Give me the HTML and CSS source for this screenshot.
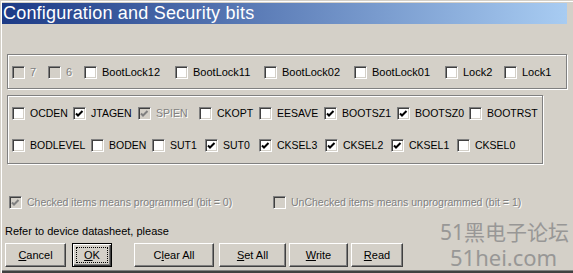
FILE: index.html
```html
<!DOCTYPE html>
<html lang="en">
<head>
  <meta charset="UTF-8" />
  <title>Configuration and Security bits</title>
  <link rel="stylesheet" href="styles.css">
</head>
<body>
  <div class="window">
    <div class="titlebar">Configuration and Security bits</div>

    <div class="group group-lock">
      <div class="row row-lock">
        <span class="item off"><span class="cb"></span>7</span>
        <span class="item off"><span class="cb"></span>6</span>
        <span class="item"><span class="cb"></span>BootLock12</span>
        <span class="item"><span class="cb"></span>BootLock11</span>
        <span class="item"><span class="cb"></span>BootLock02</span>
        <span class="item"><span class="cb"></span>BootLock01</span>
        <span class="item"><span class="cb"></span>Lock2</span>
        <span class="item"><span class="cb"></span>Lock1</span>
      </div>
    </div>

    <div class="group group-fuse">
      <div class="row row-fuse-a">
        <span class="item"><span class="cb"></span>OCDEN</span>
        <span class="item"><span class="cb checked"><svg viewBox="0 0 9 9"><polyline points="1,3.5 3,5.5 7.5,1"/></svg></span>JTAGEN</span>
        <span class="item off"><span class="cb checked"><svg viewBox="0 0 9 9"><polyline points="1,3.5 3,5.5 7.5,1"/></svg></span>SPIEN</span>
        <span class="item"><span class="cb"></span>CKOPT</span>
        <span class="item"><span class="cb"></span>EESAVE</span>
        <span class="item"><span class="cb checked"><svg viewBox="0 0 9 9"><polyline points="1,3.5 3,5.5 7.5,1"/></svg></span>BOOTSZ1</span>
        <span class="item"><span class="cb checked"><svg viewBox="0 0 9 9"><polyline points="1,3.5 3,5.5 7.5,1"/></svg></span>BOOTSZ0</span>
        <span class="item"><span class="cb"></span>BOOTRST</span>
      </div>
      <div class="row row-fuse-b">
        <span class="item"><span class="cb"></span>BODLEVEL</span>
        <span class="item"><span class="cb"></span>BODEN</span>
        <span class="item"><span class="cb"></span>SUT1</span>
        <span class="item"><span class="cb checked"><svg viewBox="0 0 9 9"><polyline points="1,3.5 3,5.5 7.5,1"/></svg></span>SUT0</span>
        <span class="item"><span class="cb checked"><svg viewBox="0 0 9 9"><polyline points="1,3.5 3,5.5 7.5,1"/></svg></span>CKSEL3</span>
        <span class="item"><span class="cb checked"><svg viewBox="0 0 9 9"><polyline points="1,3.5 3,5.5 7.5,1"/></svg></span>CKSEL2</span>
        <span class="item"><span class="cb checked"><svg viewBox="0 0 9 9"><polyline points="1,3.5 3,5.5 7.5,1"/></svg></span>CKSEL1</span>
        <span class="item"><span class="cb"></span>CKSEL0</span>
      </div>
    </div>

    <div class="legend">
      <span class="item off"><span class="cb checked"><svg viewBox="0 0 9 9"><polyline points="1,3.5 3,5.5 7.5,1"/></svg></span>Checked items means programmed (bit = 0)</span>
      <span class="item off"><span class="cb"></span>UnChecked items means unprogrammed (bit = 1)</span>
    </div>

    <div class="note">Refer to device datasheet, please</div>

    <div class="buttons">
      <button class="btn btn-cancel"><u>C</u>ancel</button>
      <button class="btn btn-ok default"><span class="focus"><u>O</u>K</span></button>
      <button class="btn btn-clear">C<u>l</u>ear All</button>
      <button class="btn btn-set"><u>S</u>et All</button>
      <button class="btn btn-write"><u>W</u>rite</button>
      <button class="btn btn-read"><u>R</u>ead</button>
    </div>

    <div class="watermark">
      <div class="wm-cn">51黑电子论坛</div>
      <div class="wm-en">51hei.com</div>
    </div>
  </div>
</body>
</html>
```

FILE: styles.css
```css
body {
  margin: 0;
  background: #d4d0c8;
}
.window {
  position: relative;
  width: 573px;
  height: 273px;
  box-sizing: border-box;
  overflow: hidden;
  background: #d4d0c8;
  font-family: "Liberation Sans", Arial, sans-serif;
  font-size: 11px;
  line-height: 13px;
  color: #000;
  box-shadow: inset 1px 1px 0 #d4d0c8, inset 2px 2px 0 #fff, inset 0 -2px 0 #404040, inset 0 -3px 0 #808080;
}
.titlebar {
  margin: 3px 6px 0 2px;
  height: 21px;
  padding-left: 1px;
  line-height: 21px;
  font-size: 18px;
  letter-spacing: 0.2px;
  color: #fff;
  background: linear-gradient(to right, #1c3a86, #a8ccf2);
}
.group {
  box-sizing: border-box;
  margin-left: 7px;
  padding: 11px 0 0 4px;
  border: 1px solid #808080;
  box-shadow: inset 1px 1px 0 #fff, 1px 1px 0 #fff;
}
.group-lock {
  margin-top: 30px;
  width: 560px;
  height: 35px;
}
.group-fuse {
  margin-top: 6px;
  width: 536px;
  height: 69px;
  display: flex;
  flex-direction: column;
  gap: 19px;
  font-size: 10.5px;
}
.row {
  display: grid;
}
.row-lock {
  grid-template-columns: 36px 36px 91px 89px 90px 91px 59px auto;
}
.row-fuse-a {
  grid-template-columns: 61px 65px 61px 60px 65px 73px 72px auto;
}
.row-fuse-b {
  grid-template-columns: 79px 61px 53px 54px 66px 66px 66px auto;
}
.item {
  display: flex;
  align-items: center;
  gap: 5px;
  height: 13px;
  white-space: nowrap;
}
.item.off {
  color: #808080;
  text-shadow: 1px 1px 0 #fff;
}
.cb {
  position: relative;
  flex: none;
  width: 13px;
  height: 13px;
  box-sizing: border-box;
  background: #fff;
  border: 1px solid;
  border-color: #808080 #fff #fff #808080;
  box-shadow: inset 1px 1px 0 #404040, inset -1px -1px 0 #d4d0c8;
}
.off .cb {
  background: #d4d0c8;
}
.cb svg {
  position: absolute;
  left: 1px;
  top: 2px;
  width: 9px;
  height: 9px;
}
.cb polyline {
  fill: none;
  stroke: #000;
  stroke-width: 2;
}
.off .cb polyline {
  stroke: #808080;
}
.legend {
  display: grid;
  grid-template-columns: 264px auto;
  margin: 32px 0 0 9px;
  font-size: 10.5px;
}
.note {
  margin: 16px 0 0 5px;
}
.buttons {
  display: flex;
  margin: 5px 0 0 5px;
}
.btn {
  box-sizing: border-box;
  height: 24px;
  padding: 0;
  margin: 0;
  font: inherit;
  color: #000;
  background: #d4d0c8;
  border: 1px solid;
  border-color: #fff #404040 #404040 #fff;
  box-shadow: inset -1px -1px 0 #808080;
}
.btn u {
  text-decoration: underline;
}
.btn-cancel { width: 61px; }
.btn-ok { width: 40px; margin-left: 6px; }
.btn-clear { width: 80px; margin-left: 22px; }
.btn-set { width: 67px; margin-left: 5px; }
.btn-write { width: 59px; margin-left: 3px; }
.btn-read { width: 52px; margin-left: 3px; }
.btn.default {
  border: 1px solid #000;
  box-shadow: inset 1px 1px 0 #fff, inset -1px -1px 0 #404040, inset -2px -2px 0 #808080;
  padding: 3px;
}
.focus {
  display: flex;
  align-items: center;
  justify-content: center;
  height: 100%;
  border: 1px dotted #000;
  box-sizing: border-box;
}
.watermark {
  position: absolute;
  left: 440px;
  top: 220px;
  color: #8e8e8e;
  font-family: "Noto Sans", "Noto Sans CJK SC", sans-serif;
  white-space: nowrap;
  opacity: 0.85;
}
.wm-cn {
  font-size: 21px;
  line-height: 24px;
}
.wm-en {
  margin-left: 10px;
  font-size: 22px;
  line-height: 26px;
}
```
